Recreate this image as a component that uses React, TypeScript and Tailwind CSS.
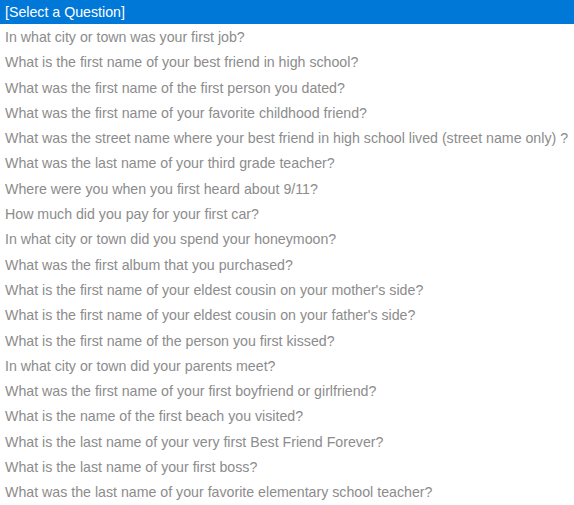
const questions = [
  "In what city or town was your first job?",
  "What is the first name of your best friend in high school?",
  "What was the first name of the first person you dated?",
  "What was the first name of your favorite childhood friend?",
  "What was the street name where your best friend in high school lived (street name only) ?",
  "What was the last name of your third grade teacher?",
  "Where were you when you first heard about 9/11?",
  "How much did you pay for your first car?",
  "In what city or town did you spend your honeymoon?",
  "What was the first album that you purchased?",
  "What is the first name of your eldest cousin on your mother's side?",
  "What is the first name of your eldest cousin on your father's side?",
  "What is the first name of the person you first kissed?",
  "In what city or town did your parents meet?",
  "What was the first name of your first boyfriend or girlfriend?",
  "What is the name of the first beach you visited?",
  "What is the last name of your very first Best Friend Forever?",
  "What is the last name of your first boss?",
  "What was the last name of your favorite elementary school teacher?",
];

export default function App() {
  return (
    <div className="w-[574px] h-[505px] bg-white overflow-hidden font-['Liberation_Sans',Arial,sans-serif] text-[14.2px]">
      <ul className="flex flex-col">
        <li className="h-[24px] leading-[24px] px-[5px] bg-[#0078d7] text-white whitespace-nowrap">
          [Select a Question]
        </li>
        {questions.map((q) => (
          <li
            key={q}
            className="h-[25.3px] leading-[26px] px-[5px] text-[#8c8c8c] whitespace-nowrap"
          >
            {q}
          </li>
        ))}
      </ul>
    </div>
  );
}
